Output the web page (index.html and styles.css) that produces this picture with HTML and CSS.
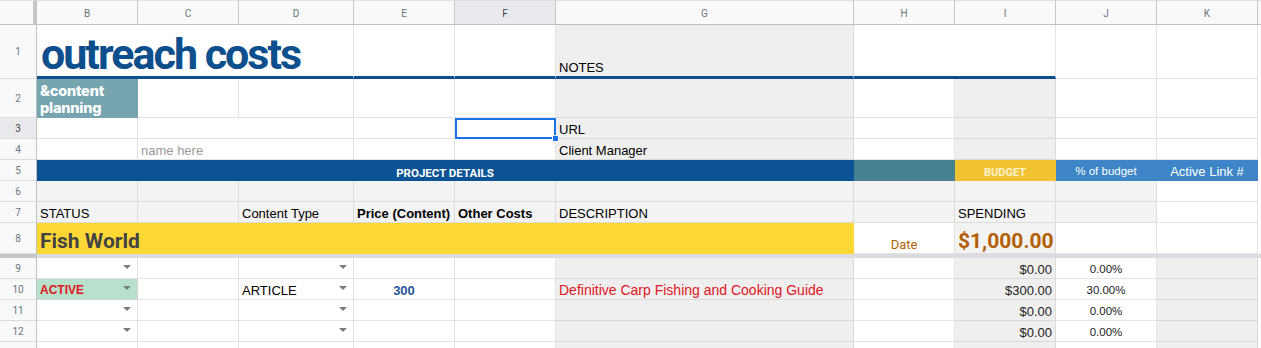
FILE: index.html
```html
<!DOCTYPE html>
<html>
<head>
<meta charset="utf-8">
<title>outreach costs</title>
<link rel="stylesheet" href="styles.css">
</head>
<body>
<div class="sheet">
  <!-- column headers -->
  <div class="corner"></div>
  <div class="ch">B</div>
  <div class="ch">C</div>
  <div class="ch">D</div>
  <div class="ch">E</div>
  <div class="ch ch-sel">F</div>
  <div class="ch">G</div>
  <div class="ch">H</div>
  <div class="ch">I</div>
  <div class="ch">J</div>
  <div class="ch">K</div>
  <div class="ch ch-fill"></div>

  <!-- row 1 -->
  <div class="rh">1</div>
  <div class="cell rule span3 title-cell"><span class="title">outreach costs</span></div>
  <div class="cell rule"></div>
  <div class="cell rule"></div>
  <div class="cell rule g">NOTES</div>
  <div class="cell rule span2"></div>
  <div class="cell"></div>
  <div class="cell"></div>
  <div class="fill"></div>

  <!-- row 2 -->
  <div class="rh">2</div>
  <div class="cell teal"><span class="sub">&amp;content<br>planning</span></div>
  <div class="cell"></div>
  <div class="cell"></div>
  <div class="cell"></div>
  <div class="cell"></div>
  <div class="cell g"></div>
  <div class="cell"></div>
  <div class="cell g"></div>
  <div class="cell"></div>
  <div class="cell"></div>
  <div class="fill"></div>

  <!-- row 3 -->
  <div class="rh rh-sel">3</div>
  <div class="cell"></div>
  <div class="cell span2"></div>
  <div class="cell"></div>
  <div class="cell selcell"><span class="sel"></span><span class="handle"></span></div>
  <div class="cell g">URL</div>
  <div class="cell"></div>
  <div class="cell g"></div>
  <div class="cell"></div>
  <div class="cell"></div>
  <div class="fill"></div>

  <!-- row 4 -->
  <div class="rh">4</div>
  <div class="cell"></div>
  <div class="cell span2 hint">name here</div>
  <div class="cell"></div>
  <div class="cell"></div>
  <div class="cell g">Client Manager</div>
  <div class="cell"></div>
  <div class="cell g"></div>
  <div class="cell"></div>
  <div class="cell"></div>
  <div class="fill"></div>

  <!-- row 5 -->
  <div class="rh">5</div>
  <div class="cell navy span6 center band-title">PROJECT DETAILS</div>
  <div class="cell tealdark"></div>
  <div class="cell budget center">BUDGET</div>
  <div class="cell blue center pct-h">% of budget</div>
  <div class="cell blue center link-h">Active Link #</div>
  <div class="fill"></div>

  <!-- row 6 -->
  <div class="rh">6</div>
  <div class="cell g2"></div>
  <div class="cell g2"></div>
  <div class="cell g2"></div>
  <div class="cell g2"></div>
  <div class="cell g2"></div>
  <div class="cell g2"></div>
  <div class="cell g2"></div>
  <div class="cell g2"></div>
  <div class="cell g2"></div>
  <div class="cell"></div>
  <div class="fill"></div>

  <!-- row 7 -->
  <div class="rh">7</div>
  <div class="cell g2">STATUS</div>
  <div class="cell g2"></div>
  <div class="cell g2">Content Type</div>
  <div class="cell g2 bold">Price (Content)</div>
  <div class="cell g2 bold">Other Costs</div>
  <div class="cell g2">DESCRIPTION</div>
  <div class="cell g2"></div>
  <div class="cell g2">SPENDING</div>
  <div class="cell g2"></div>
  <div class="cell"></div>
  <div class="fill"></div>

  <!-- row 8 -->
  <div class="rh">8</div>
  <div class="cell yellow span6 big">Fish World</div>
  <div class="cell center date">Date</div>
  <div class="cell g2 big money">$1,000.00</div>
  <div class="cell"></div>
  <div class="cell"></div>
  <div class="fill"></div>

  <!-- frozen divider -->
  <div class="frz-h"></div>
  <div class="frz"></div>

  <!-- row 9 -->
  <div class="rh">9</div>
  <div class="cell dd"></div>
  <div class="cell"></div>
  <div class="cell dd"></div>
  <div class="cell"></div>
  <div class="cell"></div>
  <div class="cell g"></div>
  <div class="cell"></div>
  <div class="cell g right">$0.00</div>
  <div class="cell center pct">0.00%</div>
  <div class="cell g"></div>
  <div class="fill"></div>

  <!-- row 10 -->
  <div class="rh">10</div>
  <div class="cell dd green"><span class="active">ACTIVE</span></div>
  <div class="cell"></div>
  <div class="cell dd">ARTICLE</div>
  <div class="cell center price">300</div>
  <div class="cell"></div>
  <div class="cell g red">Definitive Carp Fishing and Cooking Guide</div>
  <div class="cell"></div>
  <div class="cell g right">$300.00</div>
  <div class="cell center pct">30.00%</div>
  <div class="cell g"></div>
  <div class="fill"></div>

  <!-- row 11 -->
  <div class="rh">11</div>
  <div class="cell dd"></div>
  <div class="cell"></div>
  <div class="cell dd"></div>
  <div class="cell"></div>
  <div class="cell"></div>
  <div class="cell g"></div>
  <div class="cell"></div>
  <div class="cell g right">$0.00</div>
  <div class="cell center pct">0.00%</div>
  <div class="cell g"></div>
  <div class="fill"></div>

  <!-- row 12 -->
  <div class="rh">12</div>
  <div class="cell dd"></div>
  <div class="cell"></div>
  <div class="cell dd"></div>
  <div class="cell"></div>
  <div class="cell"></div>
  <div class="cell g"></div>
  <div class="cell"></div>
  <div class="cell g right">$0.00</div>
  <div class="cell center pct">0.00%</div>
  <div class="cell g"></div>
  <div class="fill"></div>

  <!-- row 13 (partly visible) -->
  <div class="rh"></div>
  <div class="cell dd"></div>
  <div class="cell"></div>
  <div class="cell dd"></div>
  <div class="cell"></div>
  <div class="cell"></div>
  <div class="cell g"></div>
  <div class="cell"></div>
  <div class="cell g right">$0.00</div>
  <div class="cell"></div>
  <div class="cell g"></div>
  <div class="fill"></div>
</div>
</body>
</html>
```

FILE: styles.css
```css
* { box-sizing: border-box; margin: 0; padding: 0; }

html, body {
  width: 1261px;
  height: 348px;
  overflow: hidden;
  background: #ffffff;
}

body {
  font-family: "Liberation Sans", Arial, sans-serif;
  font-size: 13px;
  color: #000000;
}

.sheet {
  display: grid;
  grid-template-columns: 37px 101px 101px 115px 101px 101px 298px 101px 101px 101px 101px 3px;
  grid-template-rows: 25px 54px 39px 21px 21px 21px 21px 21px 31px 4px 21px 21px 21px 21px 21px;
}

/* headers */
.corner {
  background: #f8f9fa;
  border-right: 4px solid #c4c7c5;
  border-bottom: 1px solid #c0c0c0;
  border-top: 1px solid #e0e0e0;
}

.ch {
  display: flex;
  align-items: center;
  justify-content: center;
  background: #f8f9fa;
  border-right: 1px solid #c7c7c7;
  border-bottom: 1px solid #c0c0c0;
  border-top: 1px solid #e0e0e0;
  font-family: Roboto, "Liberation Sans", sans-serif;
  font-size: 10px;
  color: #6f7378;
  padding-top: 1px;
}

.ch-sel { background: #e8eaed; color: #444; }
.ch-fill { border-right: none; }

.rh {
  display: flex;
  align-items: center;
  justify-content: center;
  background: #f8f9fa;
  border-right: 1px solid #c0c0c0;
  border-bottom: 1px solid #dadce0;
  font-family: Roboto, "Liberation Sans", sans-serif;
  font-size: 10px;
  color: #6f7378;
}

.rh-sel { background: #e8eaed; color: #444; }

/* cells */
.cell {
  display: flex;
  align-items: flex-end;
  padding: 0 3px;
  line-height: 17px;
  border-right: 1px solid #e2e3e3;
  border-bottom: 1px solid #e2e3e3;
  white-space: nowrap;
  overflow: hidden;
  min-width: 0;
}

.fill { background: #ffffff; }

.span2 { grid-column: span 2; }
.span3 { grid-column: span 3; }
.span6 { grid-column: span 6; }

.center { justify-content: center; }
.right { justify-content: flex-end; }
.bold { font-weight: 700; }

.g { background: #efefef; border-color: #d9d9d9; }
.g2 { background: #f3f3f3; border-color: #dcdcdc; }

/* row 1 */
.rule { border-bottom: 3px solid #0d4e8c; }

.title-cell {
  overflow: visible;
  padding-left: 4px;
}

.title {
  font-family: Roboto, "Liberation Sans", sans-serif;
  font-weight: 700;
  font-size: 43px;
  letter-spacing: -2px;
  line-height: 43px;
  color: #0d4e8c;
}

/* row 2 */
.teal {
  background: #76a5af;
  border-color: #76a5af;
  align-items: flex-end;
  padding-bottom: 1px;
}

.sub {
  font-family: Inter, "Noto Sans", sans-serif;
  font-weight: 800;
  font-size: 14.5px;
  line-height: 17px;
  letter-spacing: -0.2px;
  color: #ffffff;
}

.hint { color: #9a9a9a; }

/* row 5 */
.navy { background: #0b5394; border-color: #0b5394; }
.tealdark { background: #45818e; border-color: #45818e; }
.budget {
  background: #f1c232;
  border-color: #f1c232;
  color: #fff2cc;
  font-family: Roboto, "Liberation Sans", sans-serif;
  font-weight: 700;
  font-size: 11px;
  line-height: 14px;
}
.blue { background: #3d85c6; border-color: #3d85c6; color: #ffffff; }

.band-title {
  font-family: Roboto, "Liberation Sans", sans-serif;
  font-weight: 700;
  font-size: 11.5px;
  line-height: 14px;
  color: #ffffff;
}

.pct-h { font-size: 11.5px; }
.link-h { font-size: 13px; }

/* row 8 */
.yellow { background: #fdd835; border-color: #fdd835; }

.big {
  font-family: Roboto, "Liberation Sans", sans-serif;
  font-weight: 700;
  font-size: 21px;
  line-height: 23px;
  color: #434343;
}

.money { color: #b45f06; }

.date {
  font-family: Roboto, "Liberation Sans", sans-serif;
  font-size: 13px;
  color: #b45f06;
}

/* frozen divider */
.frz-h { background: #c4c7c5; }
.frz { grid-column: span 11; background: #dadce0; }

/* body rows */
.dd::after {
  content: "";
  margin-left: auto;
  margin-right: 3px;
  margin-bottom: 9px;
  border-left: 4px solid transparent;
  border-right: 4px solid transparent;
  border-top: 4px solid #7a7a7a;
}

.green { background: #b7e1cd; border-color: #cfd8d3; }

.active {
  font-weight: 700;
  font-size: 12px;
  color: #e0161e;
}

.price {
  font-weight: 700;
  color: #285496;
}

.red { color: #e0161e; font-size: 14px; }

.pct { font-size: 11.5px; color: #222222; }
.right { color: #222222; }

/* selection */
.selcell {
  position: relative;
  overflow: visible;
  z-index: 2;
}

.sel {
  position: absolute;
  left: 0;
  top: 0;
  right: -1px;
  bottom: -1px;
  border: 2px solid #1a73e8;
}

.handle {
  position: absolute;
  right: -4px;
  bottom: -4px;
  width: 7px;
  height: 7px;
  background: #1a73e8;
  border: 1px solid #ffffff;
}
```
